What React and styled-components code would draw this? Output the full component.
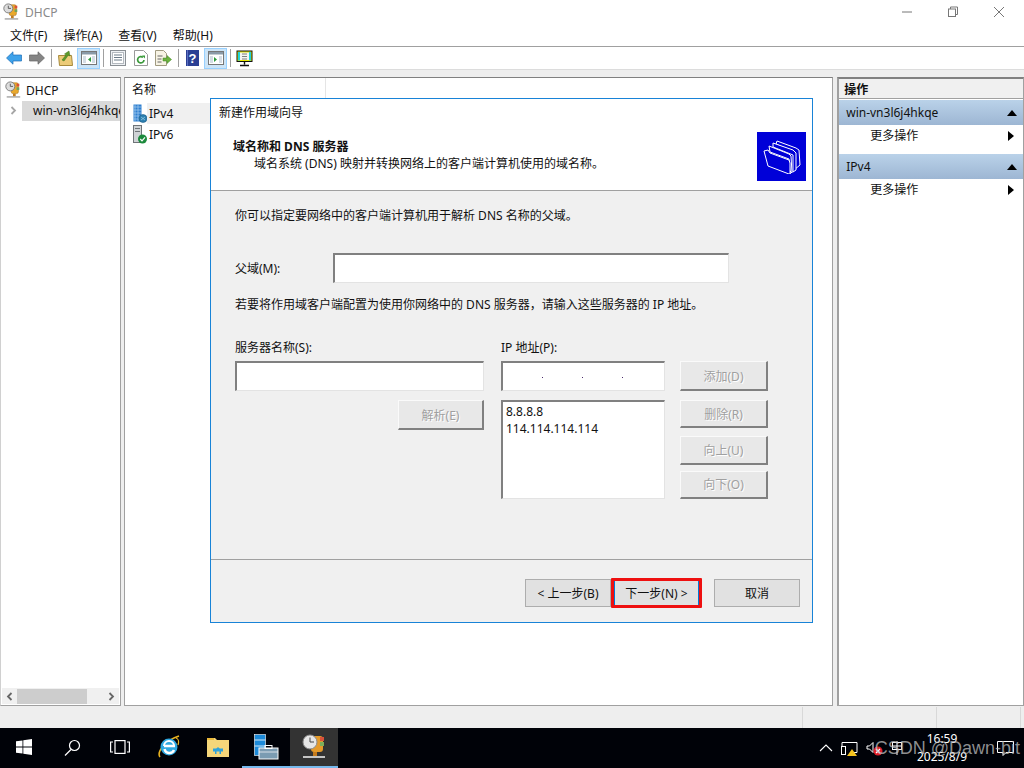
import React from "react";
import styled, { createGlobalStyle } from "styled-components";

const UI_FONT = `"Noto Sans", "Noto Sans CJK SC", sans-serif`;

const Global = createGlobalStyle`
  html, body {
    margin: 0;
    padding: 0;
    background: #fff;
  }
  * {
    box-sizing: border-box;
  }
  body {
    font-family: ${UI_FONT};
    font-size: 12px;
    color: #111;
  }
`;

function DhcpIcon({ size = 18 }) {
  return (
    <svg width={size} height={size} viewBox="0 0 20 20">
      <rect x="8" y="2" width="8" height="12" rx="2" fill="#e9a92c" stroke="#a8701a" strokeWidth="0.6" />
      <rect x="14" y="3" width="3" height="3" fill="#d8503a" />
      <rect x="14" y="7" width="3" height="3" fill="#6fa35c" />
      <circle cx="7" cy="6" r="5" fill="#dcdcdc" stroke="#777" />
      <path d="M7 3v3h3" stroke="#555" fill="none" />
      <rect x="10" y="14" width="3" height="3" fill="#c27c1e" />
      <rect x="3" y="17" width="15" height="1.4" fill="#9a9a9a" />
    </svg>
  );
}

function ServerIcon() {
  return (
    <svg width="14" height="18" viewBox="0 0 14 18">
      <rect x="2" y="0.5" width="10" height="17" fill="#d9d9d9" stroke="#777" />
      <rect x="3.5" y="3" width="7" height="1" fill="#777" />
      <rect x="3.5" y="6" width="7" height="1" fill="#777" />
      <rect x="8" y="13" width="3" height="3" fill="#63c04a" />
    </svg>
  );
}

function Ipv4Icon() {
  return (
    <svg width="14" height="19" viewBox="0 0 14 19">
      <rect x="0.5" y="0.5" width="8" height="17" fill="#2f7fd0" />
      <path d="M0 3h9M0 6h9M0 9h9M0 12h9M0 15h9M2 0v18M5 0v18" stroke="#9cc8ee" strokeWidth="0.8" />
      <circle cx="10" cy="14.5" r="4" fill="#2b7fb0" stroke="#1c5c88" strokeWidth="0.6" />
      <path d="M8 13l4 3M12 13l-4 3" stroke="#9fd0e8" strokeWidth="0.7" />
    </svg>
  );
}

function Ipv6Icon() {
  return (
    <svg width="14" height="19" viewBox="0 0 14 19">
      <rect x="0.5" y="0.5" width="8" height="17" fill="#cfd3d6" stroke="#6f7478" />
      <rect x="2" y="3" width="5" height="1" fill="#6f7478" />
      <rect x="2" y="6" width="5" height="1" fill="#6f7478" />
      <circle cx="9.5" cy="14" r="4.5" fill="#1c8a3c" />
      <path d="M7.3 14l1.7 1.8 3-3.4" stroke="#fff" strokeWidth="1.2" fill="none" />
    </svg>
  );
}

function ArrowIcon({ $back }) {
  return (
    <svg width="16" height="14" viewBox="0 0 16 14">
      {$back ? (
        <path d="M0.5 7L7 0.8V4h8.5v6H7v3.2z" fill="#3ea2ea" stroke="#1d6fb8" strokeWidth="0.7" />
      ) : (
        <path d="M15.5 7L9 0.8V4H0.5v6H9v3.2z" fill="#858585" stroke="#666" strokeWidth="0.7" />
      )}
    </svg>
  );
}

function FolderUpIcon() {
  return (
    <svg width="16" height="16" viewBox="0 0 16 16">
      <path d="M0.5 5.5h13l1 10h-13z" fill="#eccb78" stroke="#a88a3c" />
      <path d="M4 10l4-5-1.5-1L11 1l1 5-1.6-1L6 11z" fill="#5c9a2a" stroke="#3c7018" strokeWidth="0.5" />
    </svg>
  );
}

function PanelIcon({ $side }) {
  return (
    <svg width="16" height="16" viewBox="0 0 16 16">
      <rect x="0.5" y="1.5" width="15" height="13" fill="#fff" stroke="#777" />
      <rect x="1" y="2" width="14" height="2.5" fill="#8a9aa8" />
      <rect x="2" y="6" width="3" height="7" fill="#d5dde5" />
      <rect x="11" y="6" width="3" height="7" fill="#d5dde5" />
      {$side === "left" ? (
        <path d="M10 7v5L7 9.5z" fill="#2c9a3a" />
      ) : (
        <path d="M6 7v5l3-2.5z" fill="#2c9a3a" />
      )}
    </svg>
  );
}

function DocIcon() {
  return (
    <svg width="16" height="16" viewBox="0 0 16 16">
      <rect x="0.5" y="0.5" width="15" height="15" fill="#eef1f4" stroke="#8a8f94" />
      <rect x="2.5" y="2.5" width="11" height="11" fill="#fff" stroke="#b5bac0" />
      <path d="M4 5h8M4 7.5h8M4 10h8" stroke="#6b7a88" />
    </svg>
  );
}

function RefreshIcon() {
  return (
    <svg width="14" height="16" viewBox="0 0 14 16">
      <path d="M0.5 0.5h9l4 4v11H0.5z" fill="#fff" stroke="#9a9a9a" />
      <path d="M10 10a3.2 3.2 0 1 1-1-2.6" stroke="#3a9a3a" strokeWidth="1.7" fill="none" />
      <path d="M8 5.5h3v3z" fill="#3a9a3a" />
    </svg>
  );
}

function ExportIcon() {
  return (
    <svg width="17" height="16" viewBox="0 0 17 16">
      <path d="M0.5 0.5h8l3 3v12h-11z" fill="#f7f3e4" stroke="#a09a80" />
      <path d="M2.5 6h5M2.5 9h4M2.5 12h4" stroke="#666" />
      <path d="M8 8h4V5.5L16.5 9.5 12 13.5V11H8z" fill="#6cb33f" stroke="#3f8420" strokeWidth="0.5" />
    </svg>
  );
}

function HelpIcon() {
  return (
    <svg width="13" height="16" viewBox="0 0 13 16">
      <rect width="13" height="16" fill="#2b3f94" />
      <rect x="1" width="1" height="16" fill="#5a6fc0" />
      <text x="6.5" y="13" textAnchor="middle" fontSize="13" fontWeight="700" fontFamily="Liberation Sans" fill="#fff">?</text>
    </svg>
  );
}

function MonitorIcon() {
  return (
    <svg width="17" height="17" viewBox="0 0 17 17">
      <rect x="0.5" y="0.5" width="16" height="11.5" fill="#111" />
      <rect x="2" y="2" width="13" height="8.5" fill="#f4f4f4" stroke="#e8e800" />
      <path d="M2 2h2v8.5H2zM13 2h2v8.5h-2z" fill="#22d5d5" />
      <path d="M6 4h5M6 6.5h5M6 9h5" stroke="#333" strokeWidth="0.6" />
      <path d="M8.5 12v2.5M4 15.5h9" stroke="#111" strokeWidth="1.4" />
    </svg>
  );
}

function FoldersIcon() {
  return (
    <svg width="38" height="34" viewBox="0 0 38 34" fill="#0000d8" stroke="#fff" strokeWidth="1">
      <path d="M14 1l19 7 3 2 1 15-6 5V12L13 4z" />
      <path d="M10 3l20 7 3 3v17l-3 2V15L10 7z" />
      <path d="M6 6l20 8 2 2 1 17-2-2-1-12L7 12z" />
      <path d="M1 11l4-1 2 3 19 7 1 3v10l1 0-2 1L5 26z" />
    </svg>
  );
}

function CaretUp() {
  return (
    <svg width="10" height="6" viewBox="0 0 10 6">
      <path d="M5 0l5 6H0z" fill="#000" />
    </svg>
  );
}

function CaretRight() {
  return (
    <svg width="6" height="10" viewBox="0 0 6 10">
      <path d="M0 0l6 5-6 5z" fill="#000" />
    </svg>
  );
}

function Chevron({ $left, $color = "#666" }) {
  return (
    <svg width="7" height="9" viewBox="0 0 7 9">
      <path d={$left ? "M5.5 1L2 4.5 5.5 8" : "M1.5 1L5 4.5 1.5 8"} stroke={$color} strokeWidth="1.8" fill="none" />
    </svg>
  );
}

function WindowsLogo() {
  return (
    <svg width="16" height="16" viewBox="0 0 16 16" fill="#fff">
      <path d="M0 2.3l6.5-.9v6.2H0zM7.3 1.3L16 0v7.6H7.3zM0 8.4h6.5v6.2L0 13.7zM7.3 8.4H16V16l-8.7-1.2z" />
    </svg>
  );
}

function SearchGlyph() {
  return (
    <svg width="17" height="17" viewBox="0 0 17 17" fill="none" stroke="#fff" strokeWidth="1.2">
      <circle cx="10.5" cy="6.5" r="5" />
      <path d="M7 10.5L1 16.5" />
    </svg>
  );
}

function TaskViewGlyph() {
  return (
    <svg width="20" height="14" viewBox="0 0 20 14" fill="none" stroke="#fff" strokeWidth="1.2">
      <rect x="5" y="0.6" width="10" height="12.8" />
      <path d="M3 2H0.6v10H3M17 2h2.4v10H17" />
    </svg>
  );
}

function IeLogo() {
  return (
    <svg width="24" height="24" viewBox="0 0 24 24">
      <path d="M3 22C0 18 6 6 22 1" stroke="#e8b320" strokeWidth="1.6" fill="none" />
      <circle cx="12" cy="12" r="8.5" fill="#2ea8e0" />
      <path d="M7 11h11M7.5 14a5 5 0 0 0 9.5 1" stroke="#fff" strokeWidth="2.4" fill="none" />
      <path d="M7 11a5 5 0 0 1 10 0" stroke="#fff" strokeWidth="2" fill="none" />
      <path d="M19 3c3 1 3 4 2 7" stroke="#e8b320" strokeWidth="1.2" fill="none" />
    </svg>
  );
}

function ExplorerLogo() {
  return (
    <svg width="22" height="20" viewBox="0 0 22 20">
      <path d="M0 1h8l2 2h12v17H0z" fill="#f5d67a" />
      <rect y="1" width="7" height="2" fill="#eab93a" />
      <path d="M8 13l3-3 3 3v4H8z" fill="#2ea3dc" />
      <rect x="6" y="11.5" width="10" height="3" fill="#2ea3dc" />
      <rect x="9.5" y="14.5" width="3" height="5" fill="#f5d67a" />
    </svg>
  );
}

function ServerManagerLogo() {
  return (
    <svg width="25" height="26" viewBox="0 0 25 26">
      <rect x="0.5" y="0.5" width="11" height="21" fill="#1d8ad8" stroke="#fff" strokeWidth="0.6" />
      <path d="M0.5 6h11M0.5 12h11" stroke="#fff" strokeWidth="0.8" />
      <rect x="5" y="14" width="19" height="11" fill="#7b9cb2" stroke="#fff" />
      <rect x="11" y="11.5" width="7" height="3" fill="none" stroke="#fff" />
      <path d="M5 18h19" stroke="#fff" strokeWidth="0.7" />
    </svg>
  );
}

function DhcpTaskLogo() {
  return (
    <svg width="24" height="26" viewBox="0 0 24 26">
      <rect x="9" y="2" width="12" height="16" rx="3" fill="#e49a2a" />
      <rect x="18" y="3" width="4" height="4" fill="#d9523a" />
      <rect x="18" y="8" width="4" height="4" fill="#7cae5a" />
      <circle cx="8" cy="8" r="7" fill="#e6e6e6" stroke="#8a8a8a" />
      <path d="M8 3.5V8h4" stroke="#444" fill="none" />
      <rect x="11" y="18" width="4" height="4" fill="#c47a1c" />
      <rect x="1" y="22" width="22" height="2" fill="#c4c4c4" />
    </svg>
  );
}

function NetworkTray() {
  return (
    <svg width="17" height="15" viewBox="0 0 17 15">
      <path d="M1 1.5h15v10H12M1 1.5v4" stroke="#fff" fill="none" />
      <rect x="0.5" y="5.5" width="4" height="8" stroke="#fff" fill="#000" />
      <path d="M11 8l5 7H6z" fill="#f7c51e" />
    </svg>
  );
}

function VolumeTray() {
  return (
    <svg width="17" height="15" viewBox="0 0 17 15">
      <path d="M1 5h2.5L7 1.5v10L3.5 8H1z" stroke="#fff" fill="none" />
      <circle cx="12" cy="10" r="4.5" fill="#e0202a" />
      <path d="M10 8l4 4M14 8l-4 4" stroke="#fff" strokeWidth="1.2" />
    </svg>
  );
}

function ImeTray() {
  return (
    <svg width="12" height="14" viewBox="0 0 12 14" fill="none" stroke="#fff">
      <rect x="1.5" y="1.5" width="9" height="7" />
      <path d="M6 0v14M1.5 5h9" />
    </svg>
  );
}

function NoticeTray() {
  return (
    <svg width="17" height="15" viewBox="0 0 17 15" fill="none" stroke="#fff">
      <path d="M0.5 0.5h16v11H9l-3 3v-3H0.5z" />
    </svg>
  );
}

function App() {
  return (
    <Screen>
      <Global />
      <TitleBar>
        <TitleLeft>
          <DhcpIcon />
          <TitleText>DHCP</TitleText>
        </TitleLeft>
        <WindowButtons>
          <WindowButton>
            <svg width="12" height="12" viewBox="0 0 12 12">
              <path d="M1 6h10" stroke="#777" />
            </svg>
          </WindowButton>
          <WindowButton>
            <svg width="12" height="12" viewBox="0 0 12 12" fill="none" stroke="#777">
              <rect x="1.5" y="3" width="7" height="7.5" />
              <path d="M3.5 3V1h7v7.5H8.5" />
            </svg>
          </WindowButton>
          <WindowButton>
            <svg width="12" height="12" viewBox="0 0 12 12">
              <path d="M1 1l10 10M11 1L1 11" stroke="#777" />
            </svg>
          </WindowButton>
        </WindowButtons>
      </TitleBar>

      <MenuBar>
        <MenuItem>文件(F)</MenuItem>
        <MenuItem>操作(A)</MenuItem>
        <MenuItem>查看(V)</MenuItem>
        <MenuItem>帮助(H)</MenuItem>
      </MenuBar>

      <Toolbar>
        <ToolButton $w={23}><ArrowIcon $back /></ToolButton>
        <ToolButton $w={23}><ArrowIcon /></ToolButton>
        <ToolSep />
        <ToolButton $w={23}><FolderUpIcon /></ToolButton>
        <ToolButton $w={23} $active><PanelIcon $side="left" /></ToolButton>
        <ToolSep />
        <ToolButton $w={23}><DocIcon /></ToolButton>
        <ToolButton $w={23}><RefreshIcon /></ToolButton>
        <ToolButton $w={23}><ExportIcon /></ToolButton>
        <ToolSep />
        <ToolButton $w={23}><HelpIcon /></ToolButton>
        <ToolButton $w={23} $active><PanelIcon $side="right" /></ToolButton>
        <ToolSep />
        <ToolButton $w={23}><MonitorIcon /></ToolButton>
      </Toolbar>

      <Workspace>
        <TreePane>
          <TreeBody>
            <TreeRoot>
              <DhcpIcon />
              <span>DHCP</span>
            </TreeRoot>
            <TreeChild>
              <TreeArrow><Chevron $color="#a6a6a6" /></TreeArrow>
              <TreeSelected>
                <ServerIcon />
                <TreeLabel>win-vn3l6j4hkqe</TreeLabel>
              </TreeSelected>
            </TreeChild>
          </TreeBody>
          <HScroll>
            <Chevron $left />
            <HThumb />
            <Chevron />
          </HScroll>
        </TreePane>

        <ListPane>
          <ColumnHeader>
            <ColumnCell>名称</ColumnCell>
          </ColumnHeader>
          <ListRow>
            <Ipv4Icon />
            <ListLabel $selected>IPv4</ListLabel>
          </ListRow>
          <ListRow>
            <Ipv6Icon />
            <ListLabel>IPv6</ListLabel>
          </ListRow>
        </ListPane>

        <ActionPane>
          <ActionTitle>操作</ActionTitle>
          <ActionGroup>
            <span>win-vn3l6j4hkqe</span>
            <CaretUp />
          </ActionGroup>
          <ActionRow>
            <span>更多操作</span>
            <CaretRight />
          </ActionRow>
          <ActionGroup>
            <span>IPv4</span>
            <CaretUp />
          </ActionGroup>
          <ActionRow>
            <span>更多操作</span>
            <CaretRight />
          </ActionRow>
        </ActionPane>
      </Workspace>

      <StatusBar>
        <StatusCell $w={803} />
        <StatusCell $w={134} />
        <StatusCell $w={84} />
      </StatusBar>

      <Wizard>
        <WizardHead>
          <WizardTitle>新建作用域向导</WizardTitle>
          <HeadRow>
            <HeadText>
              <HeadLine>域名称和 DNS 服务器</HeadLine>
              <HeadSub>域名系统 (DNS) 映射并转换网络上的客户端计算机使用的域名称。</HeadSub>
            </HeadText>
            <HeadBadge>
              <FoldersIcon />
            </HeadBadge>
          </HeadRow>
        </WizardHead>
        <WizardBody>
          <Para>你可以指定要网络中的客户端计算机用于解析 DNS 名称的父域。</Para>
          <ParentRow>
            <ParentLabel>父域(M):</ParentLabel>
            <Field $w={396} />
          </ParentRow>
          <Para2>若要将作用域客户端配置为使用你网络中的 DNS 服务器，请输入这些服务器的 IP 地址。</Para2>
          <ServerGrid>
            <GridLabel>服务器名称(S):</GridLabel>
            <GridLabel>IP 地址(P):</GridLabel>
            <span />
            <Field $w={249} />
            <IpField>
              <IpDot />
              <IpDot />
              <IpDot />
            </IpField>
            <DisabledButton>添加(D)</DisabledButton>
            <ResolveCell>
              <DisabledButton $w={86}>解析(E)</DisabledButton>
            </ResolveCell>
            <ListBox>
              <div>8.8.8.8</div>
              <div>114.114.114.114</div>
            </ListBox>
            <ButtonStack>
              <DisabledButton>删除(R)</DisabledButton>
              <DisabledButton>向上(U)</DisabledButton>
              <DisabledButton $tight>向下(O)</DisabledButton>
            </ButtonStack>
          </ServerGrid>
        </WizardBody>
        <WizardFoot>
          <BackButton>&lt; 上一步(B)</BackButton>
          <NextButton>下一步(N) &gt;</NextButton>
          <CancelButton>取消</CancelButton>
        </WizardFoot>
      </Wizard>

      <Taskbar>
        <TaskSlot $w={48} $start={0}><WindowsLogo /></TaskSlot>
        <TaskSlot $w={48}><SearchGlyph /></TaskSlot>
        <TaskSlot $w={48}><TaskViewGlyph /></TaskSlot>
        <TaskSlot $w={50}><IeLogo /></TaskSlot>
        <TaskSlot $w={48}><ExplorerLogo /></TaskSlot>
        <TaskSlot $w={48} $running><ServerManagerLogo /></TaskSlot>
        <TaskSlot $w={48} $running $current><DhcpTaskLogo /></TaskSlot>
        <Tray>
          <svg width="14" height="8" viewBox="0 0 14 8">
            <path d="M1 7l6-6 6 6" stroke="#fff" fill="none" strokeWidth="1.1" />
          </svg>
          <NetworkTray />
          <VolumeTray />
          <ImeTray />
          <Clock>
            <span>16:59</span>
            <span>2025/8/9</span>
          </Clock>
          <NoticeTray />
        </Tray>
        <Watermark>CSDN @Dawn-bit</Watermark>
      </Taskbar>
    </Screen>
  );
}

export default App;

const Screen = styled.div`
  position: relative;
  width: 1024px;
  height: 768px;
  overflow: hidden;
  display: flex;
  flex-direction: column;
  background: #fff;
`;

const TitleBar = styled.div`
  height: 24px;
  display: flex;
  justify-content: space-between;
  align-items: center;
  padding-left: 2px;
`;
const TitleLeft = styled.div`
  display: flex;
  align-items: center;
  gap: 5px;
`;
const TitleText = styled.span`
  color: #8a8a8a;
  font-size: 12px;
`;
const WindowButtons = styled.div`
  display: flex;
  padding-right: 2px;
`;
const WindowButton = styled.div`
  width: 46px;
  height: 22px;
  display: flex;
  align-items: center;
  justify-content: center;
`;

const MenuBar = styled.div`
  height: 23px;
  display: flex;
  align-items: center;
  padding-left: 10px;
  gap: 16px;
  border-bottom: 1px solid #a0a0a0;
`;
const MenuItem = styled.span`
  font-size: 12px;
`;

const Toolbar = styled.div`
  height: 22px;
  display: flex;
  align-items: center;
  padding-left: 2px;
  gap: 0;
`;
const ToolButton = styled.div`
  width: ${(p) => p.$w}px;
  height: 21px;
  display: flex;
  align-items: center;
  justify-content: center;
  background: ${(p) => (p.$active ? "#cce4f7" : "transparent")};
  border: 1px solid ${(p) => (p.$active ? "#99d1ff" : "transparent")};
`;
const ToolSep = styled.div`
  width: 1px;
  height: 18px;
  margin: 0 2px 0 3px;
  background: #a0a0a0;
`;

const Workspace = styled.div`
  flex: 1;
  display: flex;
  gap: 3px;
  background: #eeeeee;
  padding-top: 7px;
  border-top: 1px solid #dcdcdc;
`;

const TreePane = styled.div`
  width: 121px;
  height: 629px;
  display: flex;
  flex-direction: column;
  background: #fff;
  border: 1px solid #a0a0a0;
  border-top-color: #808080;
  border-left-color: #d0d0d0;
`;
const TreeBody = styled.div`
  flex: 1;
  overflow: hidden;
  padding-top: 2px;
`;
const TreeRoot = styled.div`
  height: 20px;
  display: flex;
  align-items: center;
  gap: 4px;
  padding-left: 3px;
`;
const TreeChild = styled.div`
  display: flex;
  align-items: center;
  height: 21px;
`;
const TreeArrow = styled.div`
  width: 21px;
  padding-left: 9px;
  display: flex;
  align-items: center;
`;
const TreeSelected = styled.div`
  flex: 1;
  min-width: 0;
  height: 20px;
  display: flex;
  align-items: center;
  gap: 8px;
  padding-left: 3px;
  background: #d9d9d9;
  overflow: hidden;
`;
const TreeLabel = styled.span`
  white-space: nowrap;
`;
const HScroll = styled.div`
  height: 16px;
  margin: 0 1px 1px 1px;
  display: flex;
  align-items: center;
  justify-content: space-between;
  padding: 0 4px;
  background: #f0f0f0;
`;
const HThumb = styled.div`
  width: 70px;
  height: 15px;
  margin-right: 18px;
  background: #cdcdcd;
`;

const ListPane = styled.div`
  position: relative;
  width: 710px;
  height: 629px;
  background: #fff;
  border: 1px solid #a0a0a0;
  border-top-color: #808080;
`;
const ColumnHeader = styled.div`
  height: 22px;
  display: flex;
  margin-bottom: 3px;
`;
const ColumnCell = styled.div`
  width: 201px;
  display: flex;
  align-items: center;
  padding-left: 7px;
  border-right: 1px solid #e5e5e5;
`;
const ListRow = styled.div`
  height: 21px;
  display: flex;
  align-items: center;
  padding-left: 8px;
`;
const ListLabel = styled.span`
  width: 120px;
  height: 21px;
  display: flex;
  align-items: center;
  padding-left: 2px;
  margin-left: 0;
  background: ${(p) => (p.$selected ? "#f0f0f0" : "transparent")};
`;

const ActionPane = styled.div`
  width: 187px;
  height: 629px;
  margin-left: 1px;
  background: #fff;
  border: 1px solid #a0a0a0;
  border-top: 2px solid #808080;
  border-left: 2px solid #a0a0a0;
`;
const ActionTitle = styled.div`
  height: 20px;
  display: flex;
  align-items: center;
  padding-left: 5px;
  margin-bottom: 1px;
  font-weight: 700;
  background: #f0f0f0;
  border-bottom: 1px solid #a0a0a0;
`;
const ActionGroup = styled.div`
  height: 25px;
  display: flex;
  align-items: center;
  justify-content: space-between;
  padding: 0 6px 0 7px;
  background: linear-gradient(#bad2e9, #9db6d3);
`;
const ActionRow = styled.div`
  height: 29px;
  padding: 0 9px 0 31px;
  display: flex;
  justify-content: space-between;
  align-items: flex-start;
  line-height: 22px;
  svg {
    margin-top: 6px;
  }
`;

const StatusBar = styled.div`
  height: 22px;
  display: flex;
  background: #eeeeee;
`;
const StatusCell = styled.div`
  width: ${(p) => p.$w}px;
  margin-top: 1px;
  border-right: 1px solid #d8d8d8;
`;

const Wizard = styled.div`
  position: absolute;
  left: 210px;
  top: 98px;
  width: 603px;
  height: 525px;
  display: flex;
  flex-direction: column;
  background: #f0f0f0;
  border: 1px solid #1883d7;
`;
const WizardHead = styled.div`
  height: 92px;
  background: #fff;
  border-bottom: 1px solid #a0a0a0;
  padding: 6px 6px 0 8px;
`;
const WizardTitle = styled.div`
  line-height: 16px;
`;
const HeadRow = styled.div`
  display: flex;
  justify-content: space-between;
  margin-top: 11px;
`;
const HeadText = styled.div`
  padding: 7px 0 0 14px;
`;
const HeadLine = styled.div`
  font-weight: 700;
  line-height: 16px;
`;
const HeadSub = styled.div`
  padding-left: 21px;
  line-height: 17px;
`;
const HeadBadge = styled.div`
  width: 49px;
  height: 49px;
  display: flex;
  align-items: center;
  justify-content: center;
  background: #0000d8;
`;

const WizardBody = styled.div`
  flex: 1;
  padding: 16px 0 0 24px;
  border-bottom: 1px solid #a0a0a0;
`;
const Para = styled.div`
  line-height: 18px;
`;
const ParentRow = styled.div`
  display: flex;
  align-items: center;
  margin-top: 28px;
`;
const ParentLabel = styled.div`
  width: 98px;
`;
const Para2 = styled.div`
  margin-top: 13px;
  line-height: 18px;
`;
const sunken = `
  background: #fff;
  border-style: solid;
  border-width: 2px 1px 1px 2px;
  border-color: #808080 #e3e3e3 #e3e3e3 #808080;
`;
const Field = styled.div`
  width: ${(p) => p.$w}px;
  height: 30px;
  ${sunken}
`;
const ServerGrid = styled.div`
  display: grid;
  grid-template-columns: 249px 164px 88px;
  grid-template-rows: 22px 30px 108px;
  column-gap: 17px;
  margin-top: 25px;
  margin-left: 0;
  & > :nth-child(3n) {
    margin-left: -2px;
  }
`;
const GridLabel = styled.div`
  line-height: 18px;
`;
const IpField = styled.div`
  height: 30px;
  ${sunken}
  display: flex;
  justify-content: space-around;
  align-items: center;
  padding: 2px 22px 0 20px;
`;
const IpDot = styled.span`
  width: 1px;
  height: 1px;
  background: #4b2a6b;
`;
const ResolveCell = styled.div`
  margin-top: 9px;
  display: flex;
  justify-content: flex-end;
`;
const ListBox = styled.div`
  margin-top: 9px;
  height: 99px;
  padding: 1px 3px;
  line-height: 17px;
  ${sunken}
`;
const ButtonStack = styled.div`
  margin-top: 9px;
  display: flex;
  flex-direction: column;
  gap: 8px;
`;
const DisabledButton = styled.div`
  width: ${(p) => p.$w || 88}px;
  height: 30px;
  margin-top: ${(p) => (p.$tight ? "-2px" : "0")};
  display: flex;
  align-items: center;
  justify-content: center;
  color: #a0a0a0;
  text-shadow: 1px 1px 0 #fff;
  background: #e8e8e8;
  border-style: solid;
  border-width: 1px 2px 2px 1px;
  border-color: #fafafa #808080 #808080 #fafafa;
`;

const WizardFoot = styled.div`
  height: 62px;
  display: flex;
  align-items: flex-start;
  padding: 19px 0 0 314px;
`;
const footButton = `
  height: 28px;
  display: flex;
  align-items: center;
  justify-content: center;
  background: #e1e1e1;
  border: 1px solid #adadad;
`;
const BackButton = styled.div`
  width: 86px;
  ${footButton}
`;
const NextButton = styled.div`
  width: 91px;
  margin: -1px 0 0 0;
  height: 30px;
  display: flex;
  align-items: center;
  justify-content: center;
  background: #e1e1e1;
  border: 3px solid #ee1010;
  border-radius: 1px;
  box-shadow: inset 1px 0 0 #0078d7, inset -1px 0 0 #0078d7;
`;
const CancelButton = styled.div`
  width: 86px;
  margin-left: 12px;
  ${footButton}
`;

const Taskbar = styled.div`
  position: relative;
  height: 40px;
  display: flex;
  align-items: stretch;
  background: #000208;
`;
const TaskSlot = styled.div`
  width: ${(p) => p.$w}px;
  display: flex;
  align-items: center;
  justify-content: center;
  background: ${(p) => (p.$current ? "#333333" : "transparent")};
  border-bottom: 2px solid ${(p) => (p.$running ? "#76b9ed" : "transparent")};
`;
const Tray = styled.div`
  margin-left: auto;
  display: flex;
  align-items: center;
  gap: 8px;
  padding-right: 10px;
  color: #fff;
`;
const Clock = styled.div`
  display: flex;
  flex-direction: column;
  align-items: center;
  line-height: 18px;
  width: 70px;
  margin: 0 12px 0 -4px;
`;
const Watermark = styled.div`
  position: absolute;
  right: 4px;
  top: 10px;
  font-family: "Liberation Sans", sans-serif;
  font-size: 18px;
  color: rgba(190, 190, 190, 0.75);
  white-space: nowrap;
`;
